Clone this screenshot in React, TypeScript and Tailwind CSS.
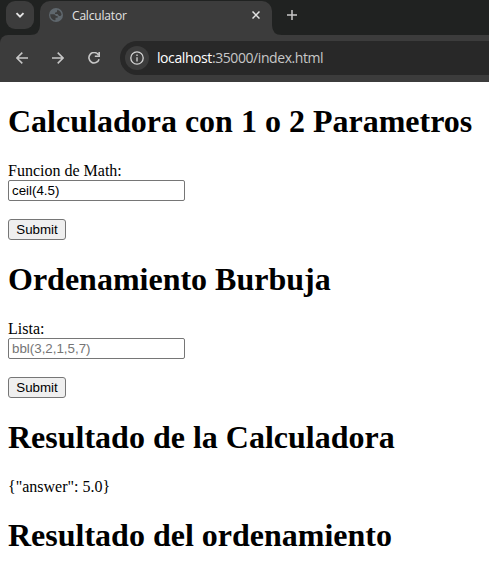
export default function App() {
  const h = "font-bold text-[32px] leading-[normal] h-[37px] whitespace-nowrap";
  const input = "block w-[177px] h-[21px] border border-[#767676] rounded-[2px] px-[3px] font-['Liberation_Sans',Arial,sans-serif] text-[13.333px] leading-[15px] outline-none bg-white placeholder:text-[#757575]";
  const btn = "block w-[58px] h-[21px] border border-[#767676] rounded-[3px] bg-[#efefef] font-['Liberation_Sans',Arial,sans-serif] text-[13.333px] leading-[15px] text-center";
  return (
    <div className="w-[489px] h-[573px] overflow-hidden bg-white text-black">
      <header className="bg-[#202221] font-['Open_Sans',sans-serif]">
        <div className="h-[35px] flex items-start">
          <div className="ml-[6px] mt-[1px] w-7 h-7 rounded-[9px] bg-[#3c3c3c] flex items-center justify-center">
            <svg width="10" height="10" viewBox="0 0 10 10" fill="none" stroke="#e3e3e3" strokeWidth="1.9"><path d="M1.500 3.200 5 6.700 8.500 3.200" /></svg>
          </div>
          <svg className="mt-[25px] -ml-[4px]" width="10" height="10" viewBox="0 0 10 10" fill="#3c3c3c"><path d="M10 0v10H0Q10 10 10 0Z" /></svg>
          <div className="mt-[1px] h-[34px] w-[232px] rounded-t-[10px] bg-[#3c3c3c] flex items-center pb-[6px]">
            <svg className="ml-[9px]" width="14" height="14" viewBox="0 0 14 14"><circle cx="7" cy="7" r="7" fill="#5f676d" /><path d="M1.300 6.200h3.400c1.500 0 2 .8 2 1.900h1.900v1.600H6.500v2.500C3.500 12.300 1 9.500 1.300 6.200ZM8.500 1.700c2 .7 3.700 2.500 4 4.700-.5 1.100-1.300 1.700-2.300 1.500-.9-.2-.9-1.500-1.800-1.900H6V4.500c1-.1 2-.2 2-1.300 0-.6.2-1 .5-1.500Z" fill="#3c3c3c" /></svg>
            <span className="ml-[9px] mt-[2px] text-[12px] tracking-[-0.18px] leading-4 text-[#e3e3e3]">Calculator</span>
            <svg className="ml-auto mr-[12px]" width="8" height="8" viewBox="0 0 8 8" stroke="#e3e3e3" strokeWidth="1.500"><path d="M.5.5l7 7M7.500.5l-7 7" /></svg>
          </div>
          <svg className="mt-[25px]" width="10" height="10" viewBox="0 0 10 10" fill="#3c3c3c"><path d="M0 0v10H10Q0 10 0 0Z" /></svg>
          <svg className="ml-[5px] mt-[10px]" width="10" height="10" viewBox="0 0 10 10" stroke="#c7c7c7" strokeWidth="1.500"><path d="M5 0v10M0 5h10" /></svg>
        </div>
        <div className="h-[47px] rounded-tl-[8px] bg-[#3c3c3c] flex items-center pb-[1px]">
          <svg className="ml-4" width="12" height="12" viewBox="0 0 12 12" fill="none" stroke="#c7c7c7" strokeWidth="1.500"><path d="M12 6H1M6.300.6.9 6l5.400 5.400" /></svg>
          <svg className="ml-6" width="12" height="12" viewBox="0 0 12 12" fill="none" stroke="#c7c7c7" strokeWidth="1.500"><path d="M0 6h11M5.700.6 11.100 6l-5.400 5.400" /></svg>
          <svg className="ml-6" width="12" height="12" viewBox="0 0 12 12" fill="none" stroke="#c7c7c7" strokeWidth="1.600"><path d="M10.500 2.900A5.200 5.200 0 1 0 11.100 7.200M11.200 0v4.300H6.800" /></svg>
          <div className="ml-5 h-[34px] flex-1 rounded-l-full bg-[#282828] flex items-center">
            <div className="ml-[5px] w-6 h-6 rounded-full bg-[#3c3c3c] flex items-center justify-center">
              <svg width="14" height="14" viewBox="0 0 14 14" fill="none" stroke="#d5d5d5" strokeWidth="1.300"><circle cx="7" cy="7" r="6.200" /><path d="M7 6.200v4.200M7 3.600v1.500" /></svg>
            </div>
            <span className="ml-2 text-[14px] tracking-[-0.42px] leading-5 whitespace-nowrap text-[#c7c7c7]"><span className="text-white">localhost</span>:35000/index.html</span>
          </div>
        </div>
      </header>
      <main className="px-2 pt-[21.44px] font-['Liberation_Serif',serif] text-[16px] leading-[normal]">
        <h1 className={h}>Calculadora con 1 o 2 Parametros</h1>
        <label className="block h-[18px] mt-[21.44px]">Funcion de Math:</label>
        <input className={input} defaultValue="ceil(4.5)" />
        <button className={btn + " mt-[18px]"}>Submit</button>
        <h1 className={h + " mt-[21.44px]"}>Ordenamiento Burbuja</h1>
        <label className="block h-[18px] mt-[21.44px]">Lista:</label>
        <input className={input} placeholder="bbl(3,2,1,5,7)" />
        <button className={btn + " mt-[18px]"}>Submit</button>
        <h1 className={h + " mt-[21.44px]"}>Resultado de la Calculadora</h1>
        <p className="h-[18px] mt-[21.44px]">{'{"answer": 5.0}'}</p>
        <h1 className={h + " mt-[21.44px]"}>Resultado del ordenamiento</h1>
      </main>
    </div>
  );
}
